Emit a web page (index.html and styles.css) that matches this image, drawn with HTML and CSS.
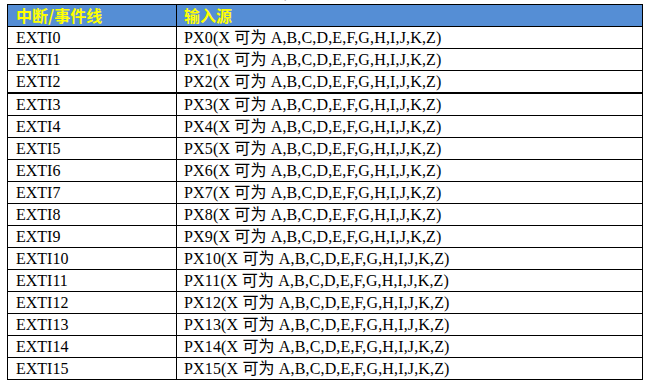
FILE: index.html
```html
<!DOCTYPE html>
<html lang="zh-CN">
<head>
<meta charset="utf-8">
<title>EXTI 映射</title>
<link rel="stylesheet" href="styles.css">
</head>
<body>
<div class="caption"><span>表 外部中断线与通用 I/O 映射关系表</span></div>
<table class="map">
  <colgroup><col class="c1"><col class="c2"></colgroup>
  <thead>
    <tr><th>中断/事件线</th><th>输入源</th></tr>
  </thead>
  <tbody>
    <tr><td>EXTI0</td><td>PX0(X 可为 A,B,C,D,E,F,G,H,I,J,K,Z)</td></tr>
    <tr><td>EXTI1</td><td>PX1(X 可为 A,B,C,D,E,F,G,H,I,J,K,Z)</td></tr>
    <tr class="thick"><td>EXTI2</td><td>PX2(X 可为 A,B,C,D,E,F,G,H,I,J,K,Z)</td></tr>
    <tr><td>EXTI3</td><td>PX3(X 可为 A,B,C,D,E,F,G,H,I,J,K,Z)</td></tr>
    <tr><td>EXTI4</td><td>PX4(X 可为 A,B,C,D,E,F,G,H,I,J,K,Z)</td></tr>
    <tr><td>EXTI5</td><td>PX5(X 可为 A,B,C,D,E,F,G,H,I,J,K,Z)</td></tr>
    <tr><td>EXTI6</td><td>PX6(X 可为 A,B,C,D,E,F,G,H,I,J,K,Z)</td></tr>
    <tr><td>EXTI7</td><td>PX7(X 可为 A,B,C,D,E,F,G,H,I,J,K,Z)</td></tr>
    <tr><td>EXTI8</td><td>PX8(X 可为 A,B,C,D,E,F,G,H,I,J,K,Z)</td></tr>
    <tr><td>EXTI9</td><td>PX9(X 可为 A,B,C,D,E,F,G,H,I,J,K,Z)</td></tr>
    <tr><td>EXTI10</td><td>PX10(X 可为 A,B,C,D,E,F,G,H,I,J,K,Z)</td></tr>
    <tr><td>EXTI11</td><td>PX11(X 可为 A,B,C,D,E,F,G,H,I,J,K,Z)</td></tr>
    <tr><td>EXTI12</td><td>PX12(X 可为 A,B,C,D,E,F,G,H,I,J,K,Z)</td></tr>
    <tr><td>EXTI13</td><td>PX13(X 可为 A,B,C,D,E,F,G,H,I,J,K,Z)</td></tr>
    <tr><td>EXTI14</td><td>PX14(X 可为 A,B,C,D,E,F,G,H,I,J,K,Z)</td></tr>
    <tr><td>EXTI15</td><td>PX15(X 可为 A,B,C,D,E,F,G,H,I,J,K,Z)</td></tr>
  </tbody>
</table>
</body>
</html>
```
FILE: styles.css
```css
html, body {
  margin: 0;
  padding: 0;
  background: #ffffff;
}
body {
  font-family: "Liberation Serif", "Noto Sans CJK SC", serif;
  font-size: 16px;
  color: #000000;
}
.caption {
  height: 4px;
  overflow: hidden;
  display: flex;
  align-items: flex-end;
  justify-content: center;
  width: 635px;
  margin-left: 7px;
}
.caption span {
  font-family: "Noto Sans CJK SC", sans-serif;
  font-size: 13px;
  font-weight: bold;
  line-height: 16px;
  margin-bottom: 3px;
  white-space: nowrap;
}
.map {
  border-collapse: collapse;
  table-layout: fixed;
  width: 635px;
  margin-left: 7px;
  border: 1px solid #000;
}
.map .c1 { width: 169px; }
.map .c2 { width: 466px; }
.map th, .map td {
  border: 1px solid #000;
  padding: 0 0 0 7px;
  height: 21px;
  line-height: 21px;
  text-align: left;
  white-space: nowrap;
  vertical-align: middle;
}
.map th:first-child, .map td:first-child {
  padding-left: 8px;
}
.map td + td {
  letter-spacing: 0.15px;
}
.map th {
  background: #558ed5;
  color: #ffff00;
  font-family: "Noto Sans CJK SC", sans-serif;
  font-weight: bold;
}
.map tr.thick td {
  border-bottom: 2px solid #000;
}
```
